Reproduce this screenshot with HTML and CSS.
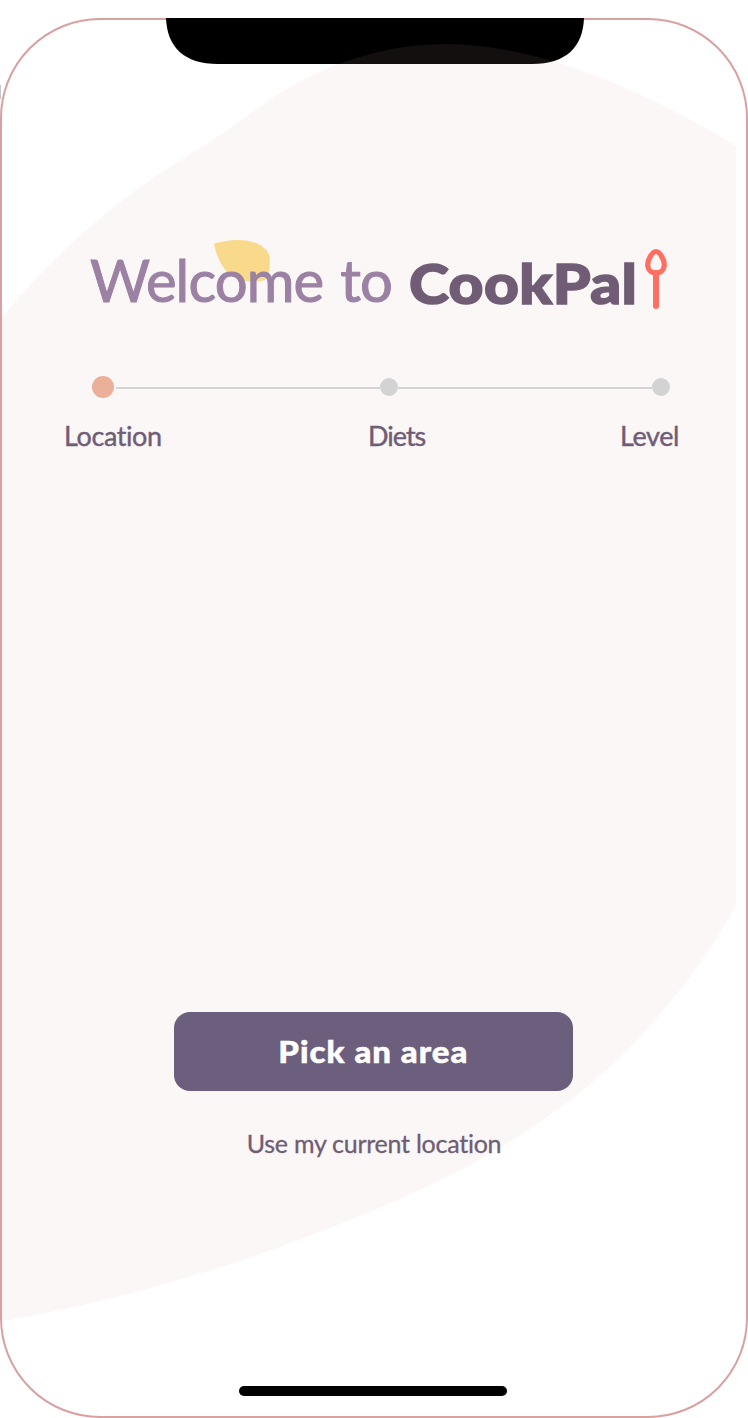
FILE: index.html
```html
<!DOCTYPE html>
<html lang="en">
<head>
<meta charset="utf-8">
<title>CookPal</title>
<link rel="stylesheet" href="styles.css">
</head>
<body>
<main class="phone">
  <div class="side-key"></div>
  <svg class="notch" viewBox="0 0 418 46" aria-hidden="true"><path d="M0 0C1 29 18 46 52 46H366C400 46 417 29 418 0Z"/></svg>
  <svg class="blob" viewBox="0 0 748 1418" aria-hidden="true">
    <path d="M2 317C49 260 111 204 170 167C220 136 239 122 268 101C332 58 395 44 445 44C530 44 632 83 736 146V905C712 951 674 1000 637 1040C576 1104 505 1148 441 1180C300 1247 137 1299 2 1321Z"/>
  </svg>
  <header class="heading">
    <svg class="leaf" viewBox="0 0 58 44" aria-hidden="true">
      <path d="M1 4.500C17 0 38-2 51 9C58 15 57 20 56.500 28C56 35 55 41 50 41.500C38 44 24 42 15 34C8 27 2 13 1 4.500Z"/>
    </svg>
    <h1 class="title"><span class="welcome">Welcome to</span><span class="brand">CookPal</span></h1>
    <svg class="spoon" viewBox="0 0 24 62" aria-hidden="true">
      <path class="bowl" d="M12 3.500C8 3.500 3.700 12 3.700 16.500C3.700 21.500 7.300 25 12 25C16.700 25 20.300 21.500 20.300 16.500C20.300 12 16 3.500 12 3.500Z"/>
      <path class="handle" d="M12 25V58"/>
    </svg>
  </header>
  <section class="progress">
    <div class="track">
      <span class="dot active"></span><span class="line first"></span>
      <span class="dot"></span><span class="line second"></span>
      <span class="dot"></span>
    </div>
    <div class="labels"><span class="label location">Location</span><span class="label diets">Diets</span><span class="label level">Level</span></div>
  </section>
  <section class="actions">
    <button class="pick"><span class="pick-text">Pick an area</span></button>
    <a class="current">Use my current location</a>
  </section>
  <div class="home-bar"></div>
</main>
</body>
</html>
```
FILE: styles.css
```css
* { box-sizing: border-box; }
body {
  margin: 0;
  padding-top: 18px;
  height: 1418px;
  background: #fff;
  font-family: Lato, "Open Sans", sans-serif;
  font-variant-ligatures: none;
  color: #705d75;
  overflow: hidden;
}
.phone {
  width: 748px;
  height: 1400px;
  border: 2px solid #d9a0a2;
  border-radius: 100px;
  display: flex;
  flex-direction: column;
  align-items: center;
}
.side-key {
  position: absolute;
  left: 0;
  top: 85px;
  width: 1px;
  height: 14px;
  background: #c6c8c6;
}
.notch {
  display: block;
  width: 418px;
  height: 46px;
  margin-top: -2px;
  margin-left: 2px;
  flex: none;
}
.blob {
  position: absolute;
  left: 0;
  top: 0;
  width: 748px;
  height: 1418px;
  fill: rgb(200, 165, 160);
  fill-opacity: .09;
  pointer-events: none;
}
.heading {
  position: relative;
  width: 744px;
  height: 100px;
  margin-top: 166px;
  padding-left: 88px;
  display: flex;
  flex: none;
}
.leaf {
  position: absolute;
  left: 211px;
  top: 9px;
  width: 58px;
  height: 44px;
  fill: #f9d98c;
}
.title {
  position: relative;
  margin: 0;
  display: flex;
  font-weight: 400;
  line-height: 72px;
}
.welcome {
  width: 319px;
  padding-top: 14px;
  font-size: 58px;
  letter-spacing: -.9px;
  word-spacing: 3px;
  color: #9b81a3;
  -webkit-text-stroke: 1px #9b81a3;
  white-space: nowrap;
}
.brand {
  width: 233px;
  padding-top: 17px;
  font-size: 56px;
  font-weight: 900;
  letter-spacing: .4px;
  -webkit-text-stroke: 1.6px #705d75;
  transform: scaleX(1.08);
  transform-origin: left;
  white-space: nowrap;
}
.spoon {
  width: 24px;
  height: 62px;
  margin: 18px 0 0 2px;
  fill: none;
  stroke: #ff6f61;
  stroke-linecap: round;
  stroke-width: 5.200;
}
.handle { stroke-width: 6; }
.progress {
  position: relative;
  width: 744px;
  height: 100px;
  margin-top: 45px;
  flex: none;
}
.track {
  height: 24px;
  padding-left: 90px;
  display: flex;
  align-items: center;
}
.dot {
  width: 18px;
  height: 18px;
  border-radius: 50%;
  background: #d3d3d3;
}
.active { width: 22px; height: 22px; background: #ecaf9a; }
.line { height: 2px; margin-top: 2px; background: #d3d3d3; }
.first { width: 264px; margin-left: 2px; }
.second { width: 254px; }
.labels {
  display: flex;
  padding-top: 19px;
  font-size: 27px;
  line-height: 36px;
  letter-spacing: -.4px;
  -webkit-text-stroke: .4px #705d75;
}
.label { white-space: nowrap; }
.location { width: 304px; margin-left: 62px; }
.diets { width: 252px; letter-spacing: -1px; }
.actions {
  position: relative;
  width: 744px;
  height: 160px;
  margin-top: 537px;
  display: flex;
  flex-direction: column;
  align-items: center;
  flex: none;
}
.pick {
  width: 399px;
  height: 78.500px;
  margin-right: 1px;
  padding: 0;
  border: 0;
  border-radius: 16px;
  background: #6c5e7d;
  color: #fff;
  font: 900 30px/36px Lato, sans-serif;
}
.pick-text {
  display: inline-block;
  letter-spacing: .9px;
  -webkit-text-stroke: .5px #fff;
  transform: scaleX(1.1);
}
.current {
  margin-top: 34px;
  font-size: 25px;
  line-height: 36px;
  letter-spacing: -.25px;
  -webkit-text-stroke: .3px #705d75;
  white-space: nowrap;
}
.home-bar {
  width: 268px;
  height: 10px;
  margin-top: 214px;
  margin-right: 2px;
  border-radius: 5px;
  background: #000;
}
```
